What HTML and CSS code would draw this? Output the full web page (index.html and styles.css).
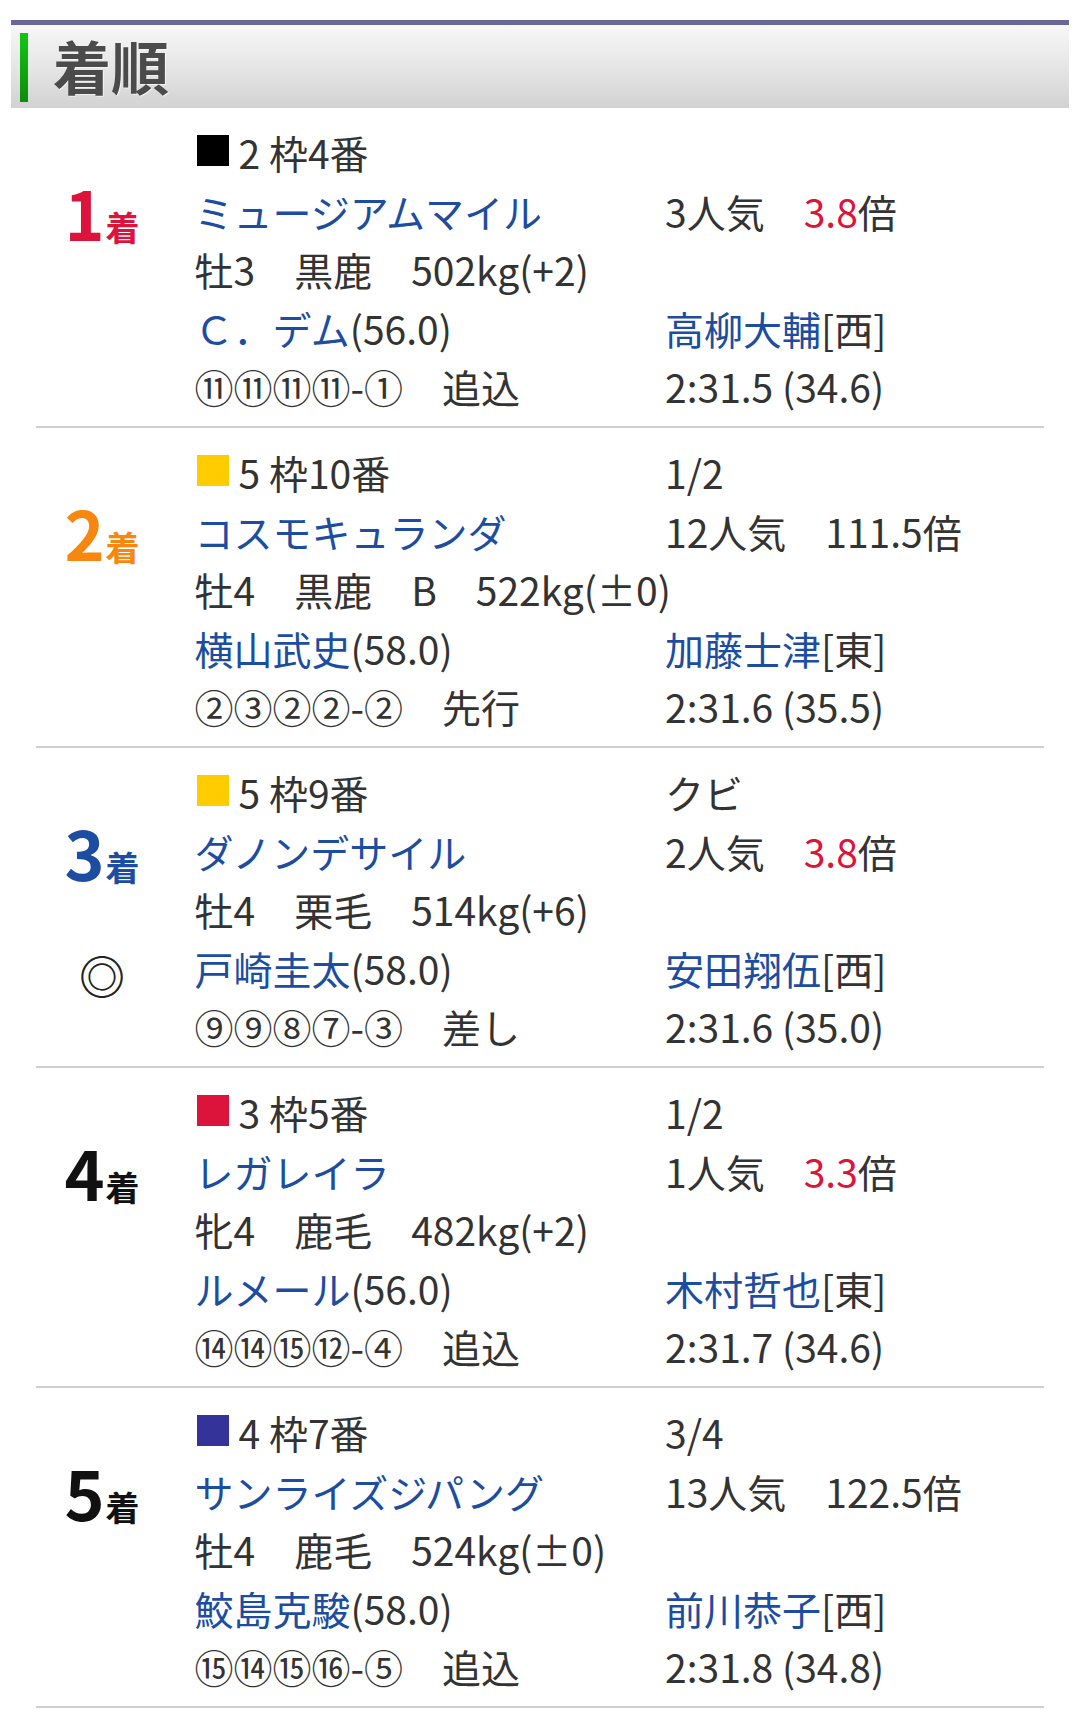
FILE: index.html
```html
<!DOCTYPE html>
<html lang="ja">
<head>
<meta charset="utf-8">
<title>着順</title>
<link rel="stylesheet" href="styles.css">
</head>
<body>
<div class="page">
  <div class="heading">
    <span class="heading-bar"></span>
    <h2 class="heading-title">着順</h2>
  </div>

  <div class="results">
    <div class="result">
      <div class="rank-col">
        <div class="rank rank-1"><span class="rank-num">1</span><span class="rank-chaku">着</span></div>
      </div>
      <div class="info">
        <div class="cell"><span class="waku waku-black"></span>2 枠4番</div>
        <div class="cell"></div>
        <div class="cell"><a class="link">ミュージアムマイル</a></div>
        <div class="cell">3人気　<span class="odds-hot">3.8</span>倍</div>
        <div class="cell cell-wide">牡3　黒鹿　502kg(+2)</div>
        <div class="cell"><a class="link">Ｃ．デム</a>(56.0)</div>
        <div class="cell"><a class="link">高柳大輔</a>[西]</div>
        <div class="cell">⑪⑪⑪⑪-①　追込</div>
        <div class="cell">2:31.5 (34.6)</div>
      </div>
    </div>

    <div class="result">
      <div class="rank-col">
        <div class="rank rank-2"><span class="rank-num">2</span><span class="rank-chaku">着</span></div>
      </div>
      <div class="info">
        <div class="cell"><span class="waku waku-yellow"></span>5 枠10番</div>
        <div class="cell">1/2</div>
        <div class="cell"><a class="link">コスモキュランダ</a></div>
        <div class="cell">12人気　111.5倍</div>
        <div class="cell cell-wide">牡4　黒鹿　B　522kg(±0)</div>
        <div class="cell"><a class="link">横山武史</a>(58.0)</div>
        <div class="cell"><a class="link">加藤士津</a>[東]</div>
        <div class="cell">②③②②-②　先行</div>
        <div class="cell">2:31.6 (35.5)</div>
      </div>
    </div>

    <div class="result">
      <div class="rank-col">
        <div class="rank rank-3"><span class="rank-num">3</span><span class="rank-chaku">着</span></div>
        <div class="mark">◎</div>
      </div>
      <div class="info">
        <div class="cell"><span class="waku waku-yellow"></span>5 枠9番</div>
        <div class="cell">クビ</div>
        <div class="cell"><a class="link">ダノンデサイル</a></div>
        <div class="cell">2人気　<span class="odds-hot">3.8</span>倍</div>
        <div class="cell cell-wide">牡4　栗毛　514kg(+6)</div>
        <div class="cell"><a class="link">戸崎圭太</a>(58.0)</div>
        <div class="cell"><a class="link">安田翔伍</a>[西]</div>
        <div class="cell">⑨⑨⑧⑦-③　差し</div>
        <div class="cell">2:31.6 (35.0)</div>
      </div>
    </div>

    <div class="result">
      <div class="rank-col">
        <div class="rank rank-4"><span class="rank-num">4</span><span class="rank-chaku">着</span></div>
      </div>
      <div class="info">
        <div class="cell"><span class="waku waku-red"></span>3 枠5番</div>
        <div class="cell">1/2</div>
        <div class="cell"><a class="link">レガレイラ</a></div>
        <div class="cell">1人気　<span class="odds-hot">3.3</span>倍</div>
        <div class="cell cell-wide">牝4　鹿毛　482kg(+2)</div>
        <div class="cell"><a class="link">ルメール</a>(56.0)</div>
        <div class="cell"><a class="link">木村哲也</a>[東]</div>
        <div class="cell">⑭⑭⑮⑫-④　追込</div>
        <div class="cell">2:31.7 (34.6)</div>
      </div>
    </div>

    <div class="result">
      <div class="rank-col">
        <div class="rank rank-5"><span class="rank-num">5</span><span class="rank-chaku">着</span></div>
      </div>
      <div class="info">
        <div class="cell"><span class="waku waku-blue"></span>4 枠7番</div>
        <div class="cell">3/4</div>
        <div class="cell"><a class="link">サンライズジパング</a></div>
        <div class="cell">13人気　122.5倍</div>
        <div class="cell cell-wide">牡4　鹿毛　524kg(±0)</div>
        <div class="cell"><a class="link">鮫島克駿</a>(58.0)</div>
        <div class="cell"><a class="link">前川恭子</a>[西]</div>
        <div class="cell">⑮⑭⑮⑯-⑤　追込</div>
        <div class="cell">2:31.8 (34.8)</div>
      </div>
    </div>
  </div>
</div>
</body>
</html>
```

FILE: styles.css
```css
html, body {
  margin: 0;
  padding: 0;
  background: #ffffff;
}

body {
  font-family: "Noto Sans CJK JP", "Noto Sans", sans-serif;
  color: #333333;
  width: 1080px;
}

.page {
  padding-top: 20px;
}

/* ---------- heading ---------- */
.heading {
  margin: 0 11px;
  height: 83px;
  border-top: 5px solid #666699;
  background: linear-gradient(to bottom, #f7f7f7 0%, #e6e6e6 50%, #d2d2d2 100%);
  display: flex;
  align-items: center;
  padding-left: 9px;
}

.heading-bar {
  align-self: flex-start;
  margin-top: 8px;
  width: 8px;
  height: 69px;
  background: linear-gradient(to bottom, #14c614 0%, #0b8e0b 100%);
}

.heading-title {
  margin: 0 0 0 25px;
  font-size: 58px;
  font-weight: 700;
  line-height: 1;
  color: #4b4b4b;
  text-shadow: 1px 1px 0 rgba(255, 255, 255, 0.6);
  padding-bottom: 3px;
}

/* ---------- results ---------- */
.results {
  margin: 0 36px;
}

.result {
  display: flex;
  padding: 15px 0 10.5px;
  border-bottom: 2px solid #cfcfcf;
}

.rank-col {
  width: 132px;
  margin-right: 26.5px;
  display: flex;
  flex-direction: column;
  align-items: center;
}

.rank {
  height: 175.5px;
  display: flex;
  align-items: baseline;
  justify-content: center;
  font-weight: 700;
  white-space: nowrap;
  padding-top: 55px;
  box-sizing: border-box;
}

.rank-num {
  font-size: 68px;
  line-height: 1;
}

.rank-chaku {
  font-size: 34px;
  line-height: 1;
  margin-left: 1px;
}

.rank-1 { color: #dc143c; }
.rank-2 { color: #f7870f; }
.rank-3 { color: #1c4da1; }
.rank-4 { color: #111111; }
.rank-5 { color: #111111; }

.mark {
  margin-top: 6px;
  font-size: 46px;
  font-weight: 700;
  line-height: 58.5px;
  color: #222222;
}

.info {
  flex: 1;
  display: grid;
  grid-template-columns: 470.5px 1fr;
  grid-auto-rows: 58.5px;
  font-size: 39px;
  line-height: 58.5px;
}

.cell {
  white-space: nowrap;
}

.cell-wide {
  grid-column: 1 / -1;
}

.link {
  color: #1c4da1;
  text-decoration: none;
}

.odds-hot {
  color: #dc143c;
}

.waku {
  display: inline-block;
  width: 32px;
  height: 31px;
  margin: 0 10px 0 2px;
  vertical-align: 3px;
}

.waku-black { background: #000000; }
.waku-yellow { background: #ffcc00; }
.waku-red { background: #dc143c; }
.waku-blue { background: #333399; }
```
